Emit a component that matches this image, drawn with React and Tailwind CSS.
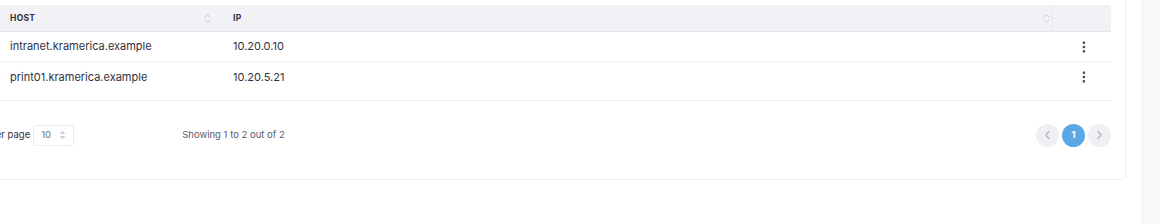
import React from 'react';

const hosts = [
  { host: 'intranet.kramerica.example', ip: '10.20.0.10' },
  { host: 'print01.kramerica.example', ip: '10.20.5.21' },
];

function SortIcon() {
  return (
    <svg width="7" height="11" viewBox="0 0 7 11" fill="none" stroke="#c9c9d2" strokeWidth="1" strokeLinecap="round" strokeLinejoin="round">
      <path d="M1 4 L3.5 1.5 L6 4" />
      <path d="M1 7 L3.5 9.5 L6 7" />
    </svg>
  );
}

function KebabIcon() {
  return (
    <svg width="4" height="12" viewBox="0 0 4 12" fill="#4b5060">
      <rect x="0.7" y="0.5" width="2.4" height="2.4" rx="0.6" />
      <rect x="0.7" y="4.8" width="2.4" height="2.4" rx="0.6" />
      <rect x="0.7" y="9.1" width="2.4" height="2.4" rx="0.6" />
    </svg>
  );
}

function Chevron({ dir }) {
  return (
    <svg width="7" height="10" viewBox="0 0 7 10" fill="none" stroke="#b3b3bd" strokeWidth="1.2" strokeLinecap="round" strokeLinejoin="round">
      {dir === 'left' ? <path d="M5 1.5 L2 5 L5 8.5" /> : <path d="M2 1.5 L5 5 L2 8.5" />}
    </svg>
  );
}

function UpDown() {
  return (
    <svg width="7" height="10" viewBox="0 0 7 10" fill="#d2d2da">
      <path d="M0.5 4 L3.5 0.8 L6.5 4 Z" />
      <path d="M0.5 6 L3.5 9.2 L6.5 6 Z" />
    </svg>
  );
}

export default function App() {
  return (
    <div
      className="flex h-[224px] w-[1160px] overflow-hidden bg-white text-[#2f3140]"
      style={{ fontFamily: 'Inter, "Open Sans", sans-serif' }}
    >
      <div className="-ml-[60px] -mt-[20px] h-[200px] w-[1186px] shrink-0 rounded-[5px] border border-[#efeff3] pl-[59px] pr-[14px] pt-[24px]">
        {/* table */}
        <div className="w-[1111px] border-b border-[#eeeef2] pb-[8px]">
          <div className="flex h-[27px] items-center border-b border-[#e6e5ee] bg-[#f2f1f6] text-[8.5px] font-bold tracking-[0.3px] text-[#2f3140]">
            <div className="flex w-[222px] items-center justify-between pl-[10px] pr-[11px]">
              <span>HOST</span>
              <SortIcon />
            </div>
            <div className="flex w-[831px] items-center justify-between self-stretch border-r border-[#e8e7ef] pl-[11px] pr-[2px]">
              <span>IP</span>
              <SortIcon />
            </div>
            <div className="flex-1" />
          </div>
          {hosts.map((h, i) => (
            <div
              key={h.host}
              className={`flex h-[30px] items-center text-[11px] ${i === 0 ? 'border-b border-[#f0f0f3]' : ''}`}
            >
              <div className="w-[222px] pl-[10px]">{h.host}</div>
              <div className="w-[831px] pl-[11px]">{h.ip}</div>
              <div className="flex flex-1 justify-center pl-[4px]">
                <KebabIcon />
              </div>
            </div>
          ))}
        </div>

        {/* footer */}
        <div className="mt-[22px] flex h-[24px] w-[1111px] items-center">
          <div className="-ml-[37px] flex items-center gap-[3px] text-[9.5px] text-[#2f3140]">
            <span>Rows per page</span>
            <div className="flex h-[21px] w-[41px] items-center gap-[8px] rounded-[3px] border border-[#ebebf0] pl-[7px] text-[9.5px] text-[#6a6c78]">
              <span>10</span>
              <UpDown />
            </div>
          </div>
          <div className="ml-[108px] text-[9.5px] text-[#5a5c6a]">Showing 1 to 2 out of 2</div>
          <div className="ml-auto flex items-center gap-[3px]">
            <button type="button" className="flex h-[23px] w-[23px] items-center justify-center rounded-full bg-[#f0f0f4]">
              <Chevron dir="left" />
            </button>
            <button type="button" className="flex h-[23px] w-[23px] items-center justify-center rounded-full bg-[#5aa9e6] text-[9.5px] font-bold text-white">
              1
            </button>
            <button type="button" className="flex h-[23px] w-[23px] items-center justify-center rounded-full bg-[#f0f0f4]">
              <Chevron dir="right" />
            </button>
          </div>
        </div>
      </div>
      <div className="ml-[15px] h-full flex-1 bg-[#f8f8fa]" />
    </div>
  );
}
